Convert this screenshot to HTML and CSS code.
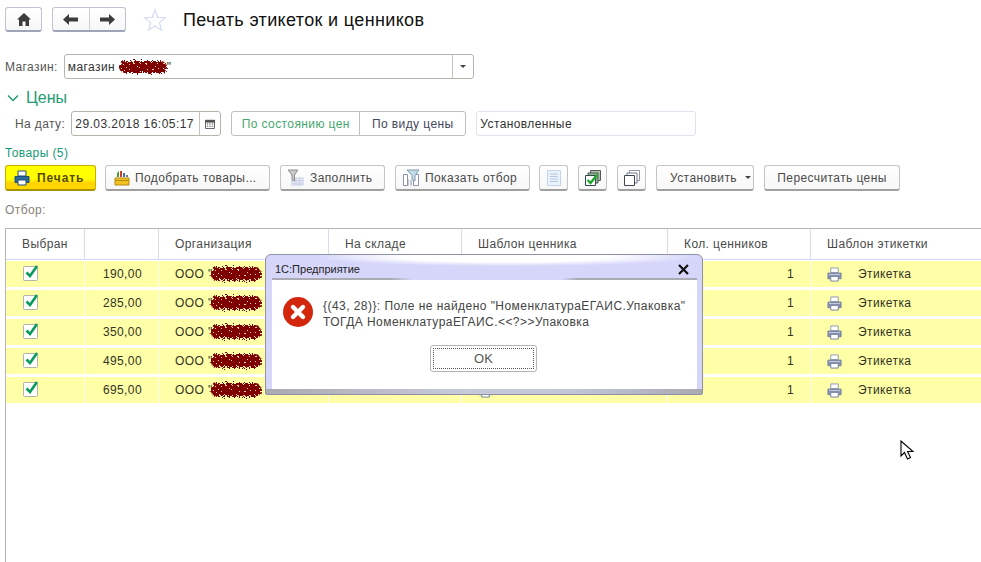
FILE: index.html
```html
<!DOCTYPE html>
<html lang="ru">
<head>
    <meta charset="UTF-8">
    <title>Печать этикеток и ценников</title>
    <link rel="stylesheet" href="styles.css">
</head>
<body>
    <svg class="defs" width="0" height="0">
        <filter id="scrawl" x="-20%" y="-50%" width="140%" height="200%">
            <feTurbulence type="fractalNoise" baseFrequency="0.6" numOctaves="2" seed="4" result="n"/>
            <feDisplacementMap in="SourceGraphic" in2="n" scale="7"/>
        </filter>
        <symbol id="printer" viewBox="0 0 16 16">
            <path d="M4 1h8v5H4z" fill="#fff" stroke="#8d97b0"/>
            <path d="M1 6.500h14v6H1z" fill="#8893b0" stroke="#737e9c"/>
            <path d="M4 10h8v5H4z" fill="#fff" stroke="#737e9c"/>
            <path d="M2 8h12" stroke="#c5cde0"/>
        </symbol>
        <symbol id="check" viewBox="0 0 18 20">
            <rect x="1.500" y="4.500" width="14" height="14" rx="1" fill="#fff" stroke="#b4b4aa"/>
            <path d="M4.500 10.500l3.500 3.500 7-10" fill="none" stroke="#0a9a5c" stroke-width="2.600"/>
        </symbol>
    </svg>

    <div class="page">
        <div class="nav">
            <button class="btn nav-btn home">
                <svg width="14" height="13" viewBox="0 0 14 13"><path d="M7 0L0 6.500h2V13h3.500V8.500h3V13H12V6.500h2z" fill="#3c3c3c"/></svg>
            </button>
            <div class="btn nav-btn pair">
                <span class="half"><svg width="15" height="11" viewBox="0 0 15 11"><path d="M6 0L0 5.500 6 11V7.500h9v-4H6z" fill="#3c3c3c"/></svg></span>
                <span class="half"><svg width="15" height="11" viewBox="0 0 15 11"><path d="M9 0l6 5.500L9 11V7.500H0v-4h9z" fill="#3c3c3c"/></svg></span>
            </div>
            <svg class="star" width="24" height="24" viewBox="0 0 24 24"><path d="M12 2l2.800 7.300 7.700.4-6 4.900 2 7.500-6.500-4.200-6.500 4.200 2-7.500-6-4.900 7.700-.4z" fill="#fff" stroke="#d3dcf0" stroke-width="1.200"/></svg>
            <h1 class="title">Печать этикеток и ценников</h1>
        </div>

        <div class="shop-row">
            <label class="lbl">Магазин:</label>
            <div class="field shop-field">
                <span class="val">магазин <span class="scrawl shop-scrawl"></span>"</span>
                <span class="drop"><i class="tri"></i></span>
            </div>
        </div>

        <div class="group-title">
            <svg width="12" height="8" viewBox="0 0 12 8"><path d="M1 1.500l5 5 5-5" fill="none" stroke="#1f9a72" stroke-width="1.400"/></svg>
            Цены
        </div>

        <div class="date-row">
            <label class="lbl">На дату:</label>
            <div class="field date-field">
                <span class="val">29.03.2018 16:05:17</span>
                <span class="drop">
                    <svg width="10" height="10" viewBox="0 0 11 11"><path d="M.5 1.500h10v9H.5z" fill="#fff" stroke="#555"/><path d="M0 1h11v3H0z" fill="#555"/><path d="M2 5.500h1.500M4.750 5.500h1.500M7.500 5.500H9M2 8h1.500M4.750 8h1.500M7.500 8H9" stroke="#555" stroke-width="1.200"/></svg>
                </span>
            </div>
            <div class="tabs">
                <span class="tab tab-on">По состоянию цен</span>
                <span class="tab">По виду цены</span>
            </div>
            <div class="field price-type"><span class="val">Установленные</span></div>
        </div>

        <div class="goods-title">Товары (5)</div>

        <div class="toolbar">
            <button class="btn btn-print">
                <svg width="16" height="16" viewBox="0 0 16 16"><path d="M4 1h8v5H4z" fill="#fff" stroke="#1f4f7a"/><path d="M1 6.500h14v6H1z" fill="#2c6a9a" stroke="#1f4f7a"/><path d="M4 10h8v5H4z" fill="#fff" stroke="#1f4f7a"/></svg>
                Печать
            </button>
            <button class="btn w-pick">
                <svg width="16" height="16" viewBox="0 0 16 16"><path d="M1 8h14v7H1z" fill="#f2c320" stroke="#b58a10"/><path d="M1 10.500h14" stroke="#b58a10"/><path d="M3 7V3l2-2v6z" fill="#4a9a3a"/><path d="M6 7V1h2v6z" fill="#c9402a"/><path d="M9 7V3h2v4z" fill="#3f6fc0"/><path d="M12 7V5h2v2z" fill="#777"/></svg>
                Подобрать товары...
            </button>
            <button class="btn w-fill">
                <svg width="17" height="17" viewBox="0 0 17 17"><path d="M5 9h11v7H5z" fill="#eef0fa" stroke="#c6cbe6"/><path d="M5 11.500h11M5 14h11M9 9v7M12.500 9v7" stroke="#c6cbe6"/><path d="M1 1h10L7.500 6v6L5 10.500V6z" fill="#c9c9c9" stroke="#8e8e8e"/></svg>
                Заполнить
            </button>
            <button class="btn w-show">
                <svg width="18" height="18" viewBox="0 0 18 18"><path d="M1.500 5.500h4v11h-4zM11.500 5.500h5v11h-5z" fill="#fff" stroke="#8b93ad"/><path d="M6 16.500V10M9 16.500V11" stroke="#8b93ad"/><path d="M5 1h12l-4 5.500V12l-3-1.500v-4z" fill="#c2dde8" stroke="#7e9cab"/></svg>
                Показать отбор
            </button>
            <button class="btn w-icon">
                <svg width="14" height="16" viewBox="0 0 14 16"><path d="M.5.500h13v15H.5z" fill="#eaf2fb" stroke="#c4d5e9"/><path d="M3 4h8M3 6.500h8M3 9h8M3 11.500h8" stroke="#b3c7de"/></svg>
            </button>
            <button class="btn w-icon">
                <svg width="16" height="16" viewBox="0 0 16 16"><path d="M5.500.500h10v10h-10z" fill="#a9c9a0" stroke="#556"/><path d="M3 3h10v10H3z" fill="#8fbb85" stroke="#556"/><path d="M.5 5.500h10v10H.5z" fill="#fff" stroke="#345"/><path d="M2.500 10l3 3L12 5" fill="none" stroke="#1aa52b" stroke-width="2.400"/></svg>
            </button>
            <button class="btn w-icon">
                <svg width="16" height="16" viewBox="0 0 16 16"><path d="M5.500.500h10v10h-10z" fill="#fff" stroke="#8c94a6"/><path d="M3 3h10v10H3z" fill="#fff" stroke="#6e7688"/><path d="M.5 5.500h10v10H.5z" fill="#fff" stroke="#3f4656"/></svg>
            </button>
            <button class="btn w-set">Установить <i class="tri"></i></button>
            <button class="btn w-recalc">Пересчитать цены</button>
        </div>

        <div class="filter-lbl">Отбор:</div>

        <div class="table">
            <div class="row head">
                <div class="cell">Выбран</div>
                <div class="cell"></div>
                <div class="cell">Организация</div>
                <div class="cell">На складе</div>
                <div class="cell">Шаблон ценника</div>
                <div class="cell">Кол. ценников</div>
                <div class="cell">Шаблон этикетки</div>
            </div>
            <div class="row item">
                <div class="cell chk"><svg width="18" height="20"><use href="#check"/></svg></div>
                <div class="cell num">190,00</div>
                <div class="cell org">ООО "<span class="scrawl org-scrawl"></span></div>
                <div class="cell"></div>
                <div class="cell tpl"><svg width="15" height="15"><use href="#printer"/></svg></div>
                <div class="cell num">1</div>
                <div class="cell tpl"><svg width="15" height="15"><use href="#printer"/></svg>Этикетка</div>
            </div>
            <div class="row item">
                <div class="cell chk"><svg width="18" height="20"><use href="#check"/></svg></div>
                <div class="cell num">285,00</div>
                <div class="cell org">ООО "<span class="scrawl org-scrawl"></span></div>
                <div class="cell"></div>
                <div class="cell tpl"><svg width="15" height="15"><use href="#printer"/></svg></div>
                <div class="cell num">1</div>
                <div class="cell tpl"><svg width="15" height="15"><use href="#printer"/></svg>Этикетка</div>
            </div>
            <div class="row item">
                <div class="cell chk"><svg width="18" height="20"><use href="#check"/></svg></div>
                <div class="cell num">350,00</div>
                <div class="cell org">ООО "<span class="scrawl org-scrawl"></span></div>
                <div class="cell"></div>
                <div class="cell tpl"><svg width="15" height="15"><use href="#printer"/></svg></div>
                <div class="cell num">1</div>
                <div class="cell tpl"><svg width="15" height="15"><use href="#printer"/></svg>Этикетка</div>
            </div>
            <div class="row item">
                <div class="cell chk"><svg width="18" height="20"><use href="#check"/></svg></div>
                <div class="cell num">495,00</div>
                <div class="cell org">ООО "<span class="scrawl org-scrawl"></span></div>
                <div class="cell"></div>
                <div class="cell tpl"><svg width="15" height="15"><use href="#printer"/></svg></div>
                <div class="cell num">1</div>
                <div class="cell tpl"><svg width="15" height="15"><use href="#printer"/></svg>Этикетка</div>
            </div>
            <div class="row item">
                <div class="cell chk"><svg width="18" height="20"><use href="#check"/></svg></div>
                <div class="cell num">695,00</div>
                <div class="cell org">ООО "<span class="scrawl org-scrawl"></span></div>
                <div class="cell"></div>
                <div class="cell tpl"><svg width="15" height="15"><use href="#printer"/></svg></div>
                <div class="cell num">1</div>
                <div class="cell tpl"><svg width="15" height="15"><use href="#printer"/></svg>Этикетка</div>
            </div>
        </div>

        <!-- окно с ошибкой поверх таблицы -->
        <div class="dialog">
            <div class="dialog-head">
                <span>1С:Предприятие</span>
                <svg width="11" height="11" viewBox="0 0 11 11"><path d="M1 1l9 9M10 1l-9 9" stroke="#111" stroke-width="2.200"/></svg>
            </div>
            <div class="dialog-body">
                <div class="msg">
                    <svg width="30" height="30" viewBox="0 0 30 30"><circle cx="15" cy="15" r="15" fill="#d3270d"/><path d="M10 10l10 10M20 10L10 20" stroke="#fff" stroke-width="4.400" stroke-linecap="round"/></svg>
                    <p>{(43, 28)}: Поле не найдено "НоменклатураЕГАИС.Упаковка"<br>ТОГДА НоменклатураЕГАИС.&lt;&lt;?&gt;&gt;Упаковка</p>
                </div>
                <button class="ok"><span>OK</span></button>
            </div>
        </div>

        <svg class="cursor" width="16" height="21" viewBox="0 0 16 21"><path d="M1 1v15l3.500-3.500 3 6.500 3-1.500-3-6h5.500z" fill="#fff" stroke="#000" stroke-width="1.100"/></svg>
    </div>
</body>
</html>
```

FILE: styles.css
```css
*{
    margin: 0;
    padding: 0;
    box-sizing: border-box;
}
body{
    font-family: "Liberation Sans", Arial, sans-serif;
    font-size: 12px;
    letter-spacing: .4px;
    color: #4a4a4a;
    background: #fff;
    overflow: hidden;
}
.defs{
    position: absolute;
}
.page{
    position: relative;
    display: flex;
    flex-direction: column;
    height: 562px;
    padding-top: 7px;
    overflow: hidden;
}

/* buttons */
.btn{
    display: flex;
    align-items: center;
    justify-content: center;
    gap: 8px;
    height: 26px;
    font: inherit;
    letter-spacing: inherit;
    color: #4a4a4a;
    background: linear-gradient(#fff, #f7f7f7);
    border: 1px solid #c4c4c4;
    border-bottom: 2px solid #9f9f9f;
    border-radius: 3px;
}

/* top line */
.nav{
    display: flex;
    align-items: center;
    height: 25px;
    padding-left: 5px;
}
.nav-btn{
    height: 25px;
    border-color: #bfc3d2;
    border-bottom-color: #a0a4b8;
}
.home{
    width: 37px;
}
.pair{
    width: 74px;
    margin-left: 10px;
    gap: 0;
}
.half{
    flex: 1;
    height: 100%;
    display: flex;
    align-items: center;
    justify-content: center;
}
.half + .half{
    border-left: 1px solid #cfcfcf;
}
.star{
    margin-left: 17px;
}
.title{
    margin-left: 16px;
    margin-top: 2px;
    font-size: 18px;
    font-weight: normal;
    letter-spacing: .35px;
    color: #111;
}

/* fields */
.lbl{
    color: #555;
}
.field{
    display: flex;
    align-items: center;
    height: 25px;
    background: #fff;
    border: 1px solid #b5b5ac;
    border-radius: 3px;
    color: #333;
}
.val{
    flex: 1;
    padding-left: 3px;
    white-space: nowrap;
}
.drop{
    display: flex;
    align-items: center;
    justify-content: center;
    width: 21px;
    height: 100%;
    border-left: 1px solid #c4c4bc;
}
.tri{
    display: inline-block;
    border: 3px solid transparent;
    border-top: 3px solid #444;
    border-bottom: 0;
}
.shop-row{
    display: flex;
    align-items: center;
    gap: 6px;
    margin-top: 22px;
    padding-left: 5px;
}
.shop-field{
    width: 410px;
}
.group-title{
    display: flex;
    align-items: center;
    gap: 7px;
    height: 20px;
    margin-top: 9px;
    padding-left: 7px;
    font-size: 16px;
    letter-spacing: 0;
    color: #1f9a72;
}
.date-row{
    display: flex;
    align-items: center;
    margin-top: 3px;
    padding-left: 15px;
}
.date-field{
    width: 150px;
    margin-left: 6px;
}
.date-field .val{
    letter-spacing: .45px;
}
.tabs{
    display: flex;
    width: 235px;
    height: 25px;
    margin-left: 10px;
    border: 1px solid #c0c0c0;
    border-radius: 3px;
}
.tab{
    display: flex;
    align-items: center;
    justify-content: center;
    flex: 1;
    color: #44465a;
}
.tab-on{
    flex: 0 0 128px;
    color: #45a86e;
    border-right: 1px solid #c0c0c0;
}
.price-type{
    width: 220px;
    margin-left: 10px;
    border-color: #e2e2ee;
}
.goods-title{
    margin-top: 10px;
    height: 19px;
    line-height: 15px;
    padding-left: 5px;
    color: #169a78;
}

/* toolbar */
.toolbar{
    display: flex;
    gap: 10px;
    padding-left: 5px;
}
.btn-print{
    width: 91px;
    margin-right: -1px;
    justify-content: flex-start;
    padding-left: 8px;
    gap: 7px;
    font-weight: bold;
    letter-spacing: .9px;
    color: #5a4a00;
    background: linear-gradient(#ffff00 0, #ffff00 55%, #ffd200 75%, #ffd800 100%);
    border-color: #c9b000;
    border-bottom-color: #a89200;
}
.w-pick{
    width: 165px;
    justify-content: flex-start;
    padding-left: 8px;
    gap: 5px;
}
.w-fill{
    width: 105px;
    justify-content: flex-start;
    padding-left: 6px;
    gap: 6px;
}
.w-show{
    width: 135px;
    margin-right: -1px;
    justify-content: flex-start;
    padding-left: 6px;
    gap: 5px;
}
.w-icon{
    width: 29px;
}
.w-set{
    width: 98px;
    justify-content: flex-start;
    padding-left: 13px;
}
.w-recalc{
    width: 136px;
}
.filter-lbl{
    margin-top: 12px;
    height: 25px;
    line-height: 15px;
    padding-left: 5px;
    color: #8a8278;
}

/* table */
.table{
    flex: 1;
    margin-left: 5px;
    border-top: 1px solid #b4b4b4;
    border-left: 1px solid #b4b4b4;
}
.row{
    display: grid;
    grid-template-columns: 79px 74px 170px 133px 206px 143px 1fr;
    align-items: stretch;
}
.cell{
    display: flex;
    align-items: center;
    min-width: 0;
    padding: 0 16px;
    border-right: 1px solid #d9d9f2;
    white-space: nowrap;
    overflow: hidden;
}
.cell:last-child{
    border-right: 0;
}
.head{
    height: 31px;
    border-bottom: 1px solid #d5d5f5;
    margin-bottom: 1px;
}
.item{
    height: 26px;
    margin-bottom: 3px;
    background: #ffffa8;
    color: #33331f;
}
.item .cell{
    border-right-color: #fffff0;
}
.chk{
    padding-left: 16px;
}
.chk svg{
    margin-top: -5px;
}
.num{
    justify-content: flex-end;
}
.tpl svg{
    flex: none;
    margin-right: 16px;
}

/* redaction scribble */
.scrawl{
    display: inline-block;
    background:
        radial-gradient(circle, #e8d8a0 0 .6px, transparent .8px) 0 0 / 6px 5px,
        #7e0000;
    border-radius: 6px;
    filter: url(#scrawl);
    vertical-align: middle;
}
.shop-scrawl{
    width: 48px;
    height: 12px;
}
.org-scrawl{
    flex: none;
    width: 50px;
    height: 14px;
    margin-left: -2px;
}

/* dialog */
.dialog{
    position: absolute;
    left: 265px;
    top: 254px;
    width: 438px;
    height: 141px;
    padding: 0 5px 5px 6px;
    letter-spacing: .45px;
    background:
        linear-gradient(90deg, #a9aab2 0, #c9cad8 45%, #c4c6d8 70%, #a9aab2 100%) 0 100% / 100% 5px no-repeat,
        radial-gradient(ellipse 190px 9px at 55% 2px, #fff 0, #fff 55%, rgba(255,255,255,0) 100%),
        #d6d6fb;
    border: 1px solid #8f92a5;
    border-radius: 6px 6px 2px 2px;
}
.dialog-head{
    display: flex;
    align-items: center;
    justify-content: space-between;
    height: 25px;
    padding: 3px 8px 0 3px;
    font-size: 11px;
    letter-spacing: 0;
    color: #222;
    background: linear-gradient(90deg, #a9aab2 0, #a9aab2 28%, #d6d6fb 33%, #d6d6fb 68%, #a9aab2 72%, #a9aab2 100%) 0 100% / 100% 2px no-repeat;
}
.dialog-body{
    height: 109px;
    padding: 17px 0 0 11px;
    background: #fff;
    color: #444;
}
.msg{
    display: flex;
    align-items: flex-start;
    gap: 10px;
}
.msg p{
    padding-top: 1px;
    line-height: 16px;
    white-space: nowrap;
}
.ok{
    display: block;
    width: 107px;
    height: 27px;
    margin: 15px 0 0 147px;
    padding: 2px;
    font: inherit;
    font-size: 13px;
    color: #555;
    background: #fff;
    border: 1px solid #b5b5b5;
    border-radius: 3px;
}
.ok span{
    display: block;
    height: 100%;
    line-height: 19px;
    border: 1px dotted #555;
}
.cursor{
    position: absolute;
    left: 900px;
    top: 440px;
}
```
